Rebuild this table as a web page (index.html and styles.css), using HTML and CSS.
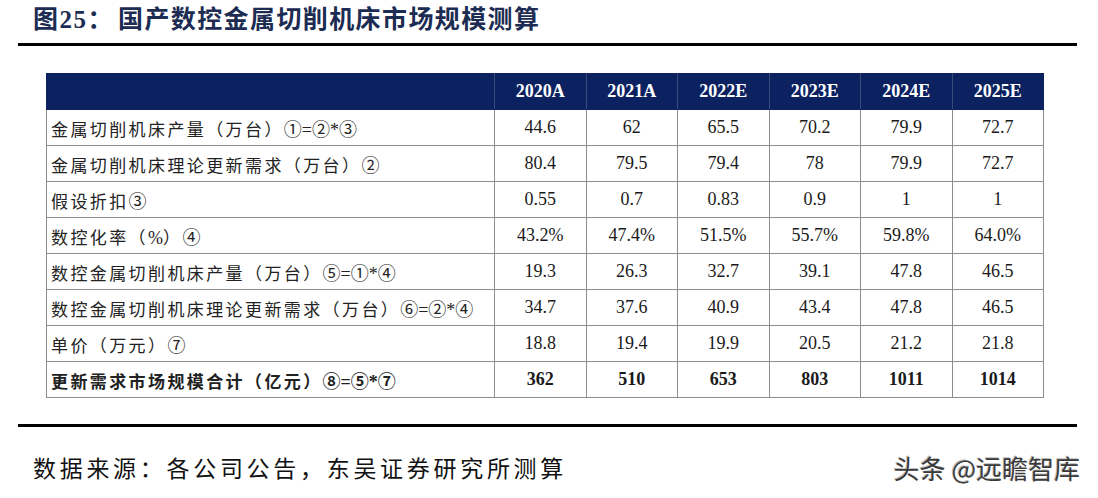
FILE: index.html
```html
<!DOCTYPE html>
<html lang="zh">
<head>
<meta charset="utf-8">
<title>图25</title>
<link rel="stylesheet" href="styles.css">
</head>
<body>
<div class="page">
  <h1 class="title">图25：<span class="t-main">国产数控金属切削机床市场规模测算</span></h1>
  <div class="rule"></div>
  <table class="data">
    <colgroup>
      <col class="c-label"><col><col><col><col><col><col>
    </colgroup>
    <thead>
      <tr><th></th><th>2020A</th><th>2021A</th><th>2022E</th><th>2023E</th><th>2024E</th><th>2025E</th></tr>
    </thead>
    <tbody>
      <tr><td class="lbl">金属切削机床产量（万台）<span class="f">①=②*③</span></td><td>44.6</td><td>62</td><td>65.5</td><td>70.2</td><td>79.9</td><td>72.7</td></tr>
      <tr><td class="lbl">金属切削机床理论更新需求（万台）<span class="f">②</span></td><td>80.4</td><td>79.5</td><td>79.4</td><td>78</td><td>79.9</td><td>72.7</td></tr>
      <tr><td class="lbl">假设折扣<span class="f">③</span></td><td>0.55</td><td>0.7</td><td>0.83</td><td>0.9</td><td>1</td><td>1</td></tr>
      <tr><td class="lbl">数控化率（<span class="f">%</span>）<span class="f">④</span></td><td>43.2%</td><td>47.4%</td><td>51.5%</td><td>55.7%</td><td>59.8%</td><td>64.0%</td></tr>
      <tr><td class="lbl">数控金属切削机床产量（万台）<span class="f">⑤=①*④</span></td><td>19.3</td><td>26.3</td><td>32.7</td><td>39.1</td><td>47.8</td><td>46.5</td></tr>
      <tr><td class="lbl">数控金属切削机床理论更新需求（万台）<span class="f">⑥=②*④</span></td><td>34.7</td><td>37.6</td><td>40.9</td><td>43.4</td><td>47.8</td><td>46.5</td></tr>
      <tr><td class="lbl">单价（万元）<span class="f">⑦</span></td><td>18.8</td><td>19.4</td><td>19.9</td><td>20.5</td><td>21.2</td><td>21.8</td></tr>
      <tr class="total"><td class="lbl">更新需求市场规模合计（亿元）<span class="f">⑧=⑤*⑦</span></td><td>362</td><td>510</td><td>653</td><td>803</td><td>1011</td><td>1014</td></tr>
    </tbody>
  </table>
  <div class="rule rule-bottom"></div>
  <div class="footer">
    <span class="source">数据来源：各公司公告，东吴证券研究所测算</span>
    <span class="mark">头条 @远瞻智库</span>
  </div>
</div>
</body>
</html>
```

FILE: styles.css
```css
* { box-sizing: border-box; }
html, body { margin: 0; padding: 0; background: #ffffff; }
body {
  width: 1098px;
  height: 498px;
  overflow: hidden;
  font-family: "Liberation Serif", "Noto Sans CJK SC", serif;
  color: #111;
}
.page { position: relative; }
.title {
  margin: 0;
  padding-left: 33px;
  height: 43px;
  line-height: 40px;
  font-family: "Liberation Serif", "Noto Sans CJK SC", serif;
  font-size: 25px;
  font-weight: 700;
  letter-spacing: 1.5px;
  color: #1c2c52;
}
.t-main { margin-left: 4px; letter-spacing: 1.4px; }
.rule {
  margin-left: 18px;
  width: 1059px;
  height: 3px;
  background: #000;
}
.data {
  margin: 27px 0 0 46px;
  width: 998px;
  border-collapse: collapse;
  table-layout: fixed;
  font-size: 18px;
}
.c-label { width: 448px; }
.data th {
  height: 36px;
  background: #0b2160;
  color: #fff;
  font-weight: 700;
  font-size: 18px;
  text-align: center;
  padding: 0;
  border: 1px solid #0b2160;
  border-right-color: #3a4a78;
}
.data th:last-child { border-right-color: #0b2160; }
.data td {
  height: 36px;
  border: 1px solid #8c8c8c;
  text-align: center;
  padding: 0;
  font-size: 18px;
  color: #1a1a1a;
}
.data td.lbl {
  text-align: left;
  padding-left: 4px;
  font-size: 17px;
  letter-spacing: 2.4px;
  color: #222;
}
.data td.lbl .f { letter-spacing: 0; font-size: 18px; }
.data tr.total td { font-weight: 700; }
.rule-bottom { margin-top: 26px; }
.footer {
  display: flex;
  justify-content: space-between;
  align-items: center;
  margin-top: 25px;
  padding: 0 18px 0 33px;
  height: 30px;
}
.source {
  font-family: "Noto Sans CJK SC", serif;
  font-size: 23px;
  letter-spacing: 3.7px;
  color: #111;
}
.mark {
  font-family: "Noto Sans CJK SC", sans-serif;
  font-size: 26px;
  color: #3a3a3a;
  text-shadow: 1px 1px 0 #ffffff, -1px -1px 0 #bdbdbd;
  letter-spacing: 0;
}
```
